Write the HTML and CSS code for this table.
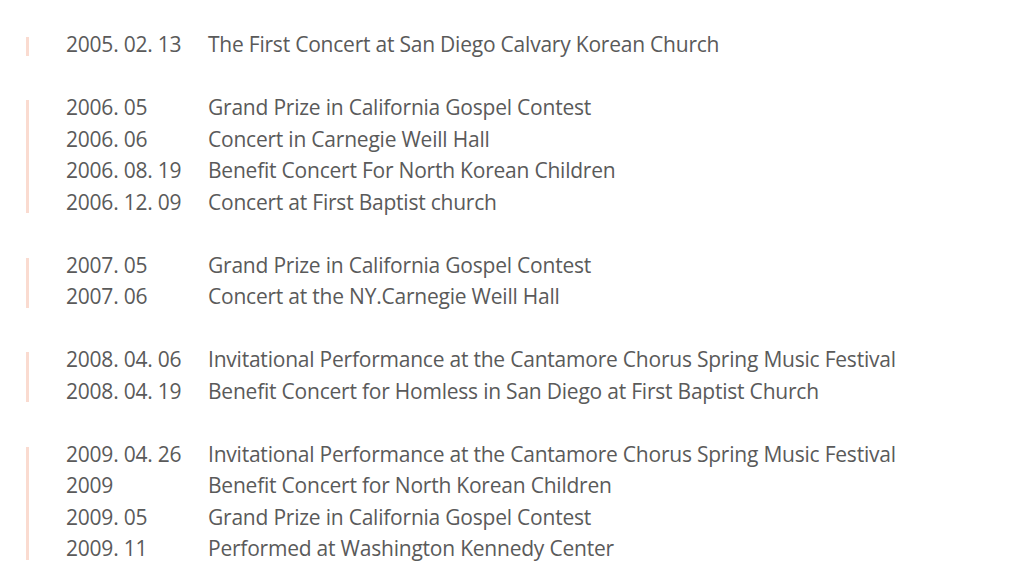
FILE: index.html
```html
<!DOCTYPE html>
<html>
<head>
<meta charset="utf-8">
<link rel="stylesheet" href="styles.css">
</head>
<body>
<div class="timeline">
  <div class="group">
    <div class="bar"></div>
    <div class="rows">
      <div class="row"><span class="date">2005. 02. 13</span><span class="desc">The First Concert at San Diego Calvary Korean Church</span></div>
    </div>
  </div>
  <div class="group">
    <div class="bar"></div>
    <div class="rows">
      <div class="row"><span class="date">2006. 05</span><span class="desc">Grand Prize in California Gospel Contest</span></div>
      <div class="row"><span class="date">2006. 06</span><span class="desc">Concert in Carnegie Weill Hall</span></div>
      <div class="row"><span class="date">2006. 08. 19</span><span class="desc">Benefit Concert For North Korean Children</span></div>
      <div class="row"><span class="date">2006. 12. 09</span><span class="desc">Concert at First Baptist church</span></div>
    </div>
  </div>
  <div class="group">
    <div class="bar"></div>
    <div class="rows">
      <div class="row"><span class="date">2007. 05</span><span class="desc">Grand Prize in California Gospel Contest</span></div>
      <div class="row"><span class="date">2007. 06</span><span class="desc">Concert at the NY.Carnegie Weill Hall</span></div>
    </div>
  </div>
  <div class="group">
    <div class="bar"></div>
    <div class="rows">
      <div class="row"><span class="date">2008. 04. 06</span><span class="desc">Invitational Performance at the Cantamore Chorus Spring Music Festival</span></div>
      <div class="row"><span class="date">2008. 04. 19</span><span class="desc">Benefit Concert for Homless in San Diego at First Baptist Church</span></div>
    </div>
  </div>
  <div class="group">
    <div class="bar"></div>
    <div class="rows">
      <div class="row"><span class="date">2009. 04. 26</span><span class="desc">Invitational Performance at the Cantamore Chorus Spring Music Festival</span></div>
      <div class="row"><span class="date">2009</span><span class="desc">Benefit Concert for North Korean Children</span></div>
      <div class="row"><span class="date">2009. 05</span><span class="desc">Grand Prize in California Gospel Contest</span></div>
      <div class="row"><span class="date">2009. 11</span><span class="desc">Performed at Washington Kennedy Center</span></div>
    </div>
  </div>
</div>
</body>
</html>
```

FILE: styles.css
```css
html, body {
  margin: 0;
  padding: 0;
  background: #ffffff;
}
body {
  font-family: "Open Sans", "Liberation Sans", sans-serif;
  color: #5a5a5a;
  font-size: 21px;
  letter-spacing: -0.22px;
}
.timeline {
  padding: 29px 0 0 26px;
}
.group {
  display: flex;
  margin-bottom: 31.5px;
}
.bar {
  width: 3px;
  margin: 8px 0 5px;
  background: #fadbd0;
}
.rows {
  margin-left: 37px;
}
.row {
  display: flex;
  height: 31.5px;
  line-height: 31.5px;
  white-space: nowrap;
}
.date {
  width: 142px;
}
```
